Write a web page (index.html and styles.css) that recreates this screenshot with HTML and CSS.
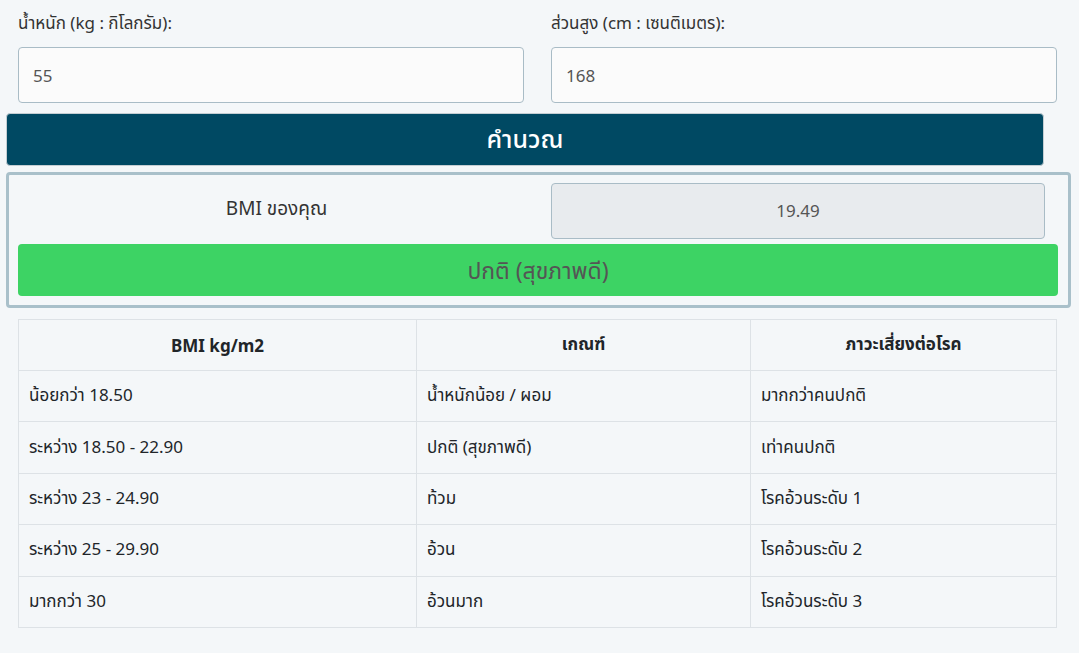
FILE: index.html
```html
<!DOCTYPE html>
<html lang="th">
<head>
    <meta charset="UTF-8">
    <meta name="viewport" content="width=device-width, initial-scale=1.0">
    <title>BMI Calculator</title>
    <link rel="stylesheet" href="styles.css">
</head>
<body>
    <div class="inputs">
        <div class="field">
            <label for="weight">น้ำหนัก (kg : กิโลกรัม):</label>
            <input class="form-input" id="weight" type="text" value="55">
        </div>
        <div class="field">
            <label for="height">ส่วนสูง (cm : เซนติเมตร):</label>
            <input class="form-input" id="height" type="text" value="168">
        </div>
    </div>

    <button class="calc-btn">คำนวณ</button>

    <div class="result-box">
        <div class="result-row">
            <div class="result-label">BMI ของคุณ</div>
            <div class="result-value">19.49</div>
        </div>
        <div class="result-status">ปกติ (สุขภาพดี)</div>
    </div>

    <table class="bmi-table">
        <thead>
            <tr>
                <th class="col-a">BMI kg/m2</th>
                <th class="col-b">เกณฑ์</th>
                <th>ภาวะเสี่ยงต่อโรค</th>
            </tr>
        </thead>
        <tbody>
            <tr><td>น้อยกว่า 18.50</td><td>น้ำหนักน้อย / ผอม</td><td>มากกว่าคนปกติ</td></tr>
            <tr><td>ระหว่าง 18.50 - 22.90</td><td>ปกติ (สุขภาพดี)</td><td>เท่าคนปกติ</td></tr>
            <tr><td>ระหว่าง 23 - 24.90</td><td>ท้วม</td><td>โรคอ้วนระดับ 1</td></tr>
            <tr><td>ระหว่าง 25 - 29.90</td><td>อ้วน</td><td>โรคอ้วนระดับ 2</td></tr>
            <tr><td>มากกว่า 30</td><td>อ้วนมาก</td><td>โรคอ้วนระดับ 3</td></tr>
        </tbody>
    </table>
</body>
</html>
```

FILE: styles.css
```css
body {
    font-family: 'Noto Sans', 'Noto Sans Thai', sans-serif;
    background: #f4f7f9;
    color: #212529;
    margin: 0;
    padding: 0;
    font-size: 17px;
}

.inputs {
    display: grid;
    grid-template-columns: 506px 506px;
    gap: 27px;
    padding: 11px 0 0 18px;
}

.field label {
    display: block;
    font-size: 17px;
    line-height: 23px;
    color: #333;
    margin-bottom: 13px;
}

.form-input {
    display: block;
    box-sizing: border-box;
    width: 100%;
    height: 56px;
    padding: 0 14px;
    font-family: inherit;
    font-size: 17px;
    color: #555;
    background: #fbfbfb;
    border: 1px solid #a9bcc6;
    border-radius: 4px;
}

.calc-btn {
    display: block;
    width: 1038px;
    height: 53px;
    margin: 10px 0 0 6px;
    font-family: inherit;
    font-size: 25px;
    font-weight: 500;
    color: #fff;
    background: #004963;
    border: 1px solid #c4ced3;
    border-radius: 4px;
}

.result-box {
    box-sizing: border-box;
    width: 1065px;
    margin: 6px 0 0 6px;
    padding: 8px 10px 9px 9px;
    border: 3px solid #a9c0ca;
    border-radius: 4px;
}

.result-row {
    display: grid;
    grid-template-columns: 1fr 494px;
    gap: 16px;
    align-items: center;
    padding-right: 13px;
}

.result-label {
    text-align: center;
    font-size: 19px;
    color: #333;
    padding-bottom: 3px;
}

.result-value {
    box-sizing: border-box;
    height: 56px;
    line-height: 54px;
    text-align: center;
    font-size: 17px;
    color: #555;
    background: #e8ebee;
    border: 1px solid #a9bcc6;
    border-radius: 4px;
}

.result-status {
    margin-top: 5px;
    height: 52px;
    line-height: 52px;
    text-align: center;
    font-size: 23px;
    color: #555;
    background: #3dd364;
    border-radius: 4px;
}

.bmi-table {
    border-collapse: collapse;
    width: 1039px;
    margin: 11px 0 0 18px;
}

.bmi-table th,
.bmi-table td {
    border: 1px solid #dde2e6;
    height: 50px;
    padding: 0 10px;
    font-size: 17px;
    color: #212529;
}

.bmi-table td {
    height: 50.4px;
}

.bmi-table th {
    font-weight: bold;
    text-align: center;
}

.col-a {
    width: 377px;
}

.col-b {
    width: 313px;
}
```
